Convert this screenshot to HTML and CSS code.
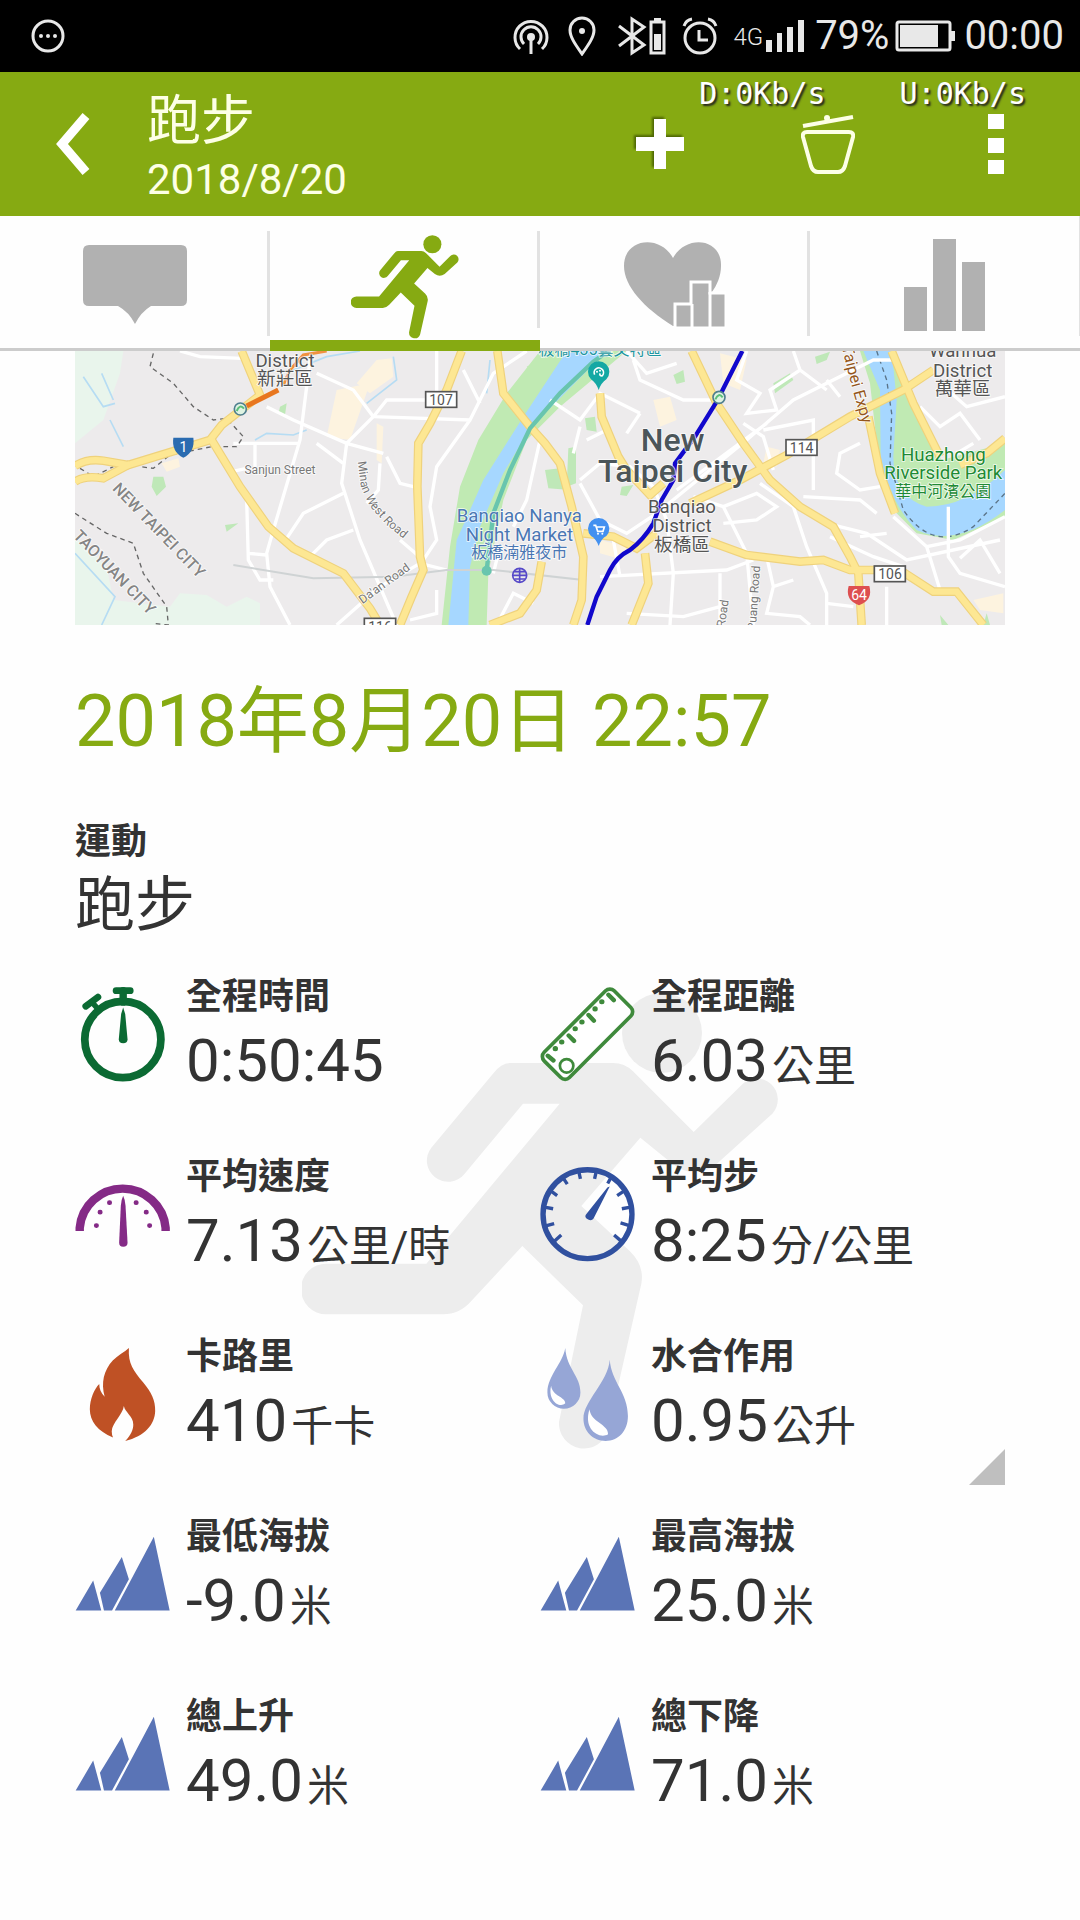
FILE: index.html
```html
<!DOCTYPE html>
<html lang="zh-Hant">
<head>
    <meta charset="UTF-8">
    <meta name="viewport" content="width=device-width, initial-scale=1.0">
    <title>跑步 2018/8/20</title>
    <link rel="stylesheet" href="styles.css">
</head>
<body>
    <!-- Shared icons -->
    <svg class="defs" width="0" height="0" aria-hidden="true">
        <symbol id="runner" viewBox="68 98 1432 1374">
            <circle cx="1147" cy="218" r="120"/>
            <path d="M690 308H1000Q1035 308 1060 333L1242 515L1385 375A62 62 0 0 1 1478 460L1310 612Q1245 660 1180 612L1082 532L905 737L1050 872Q1095 915 1085 970L985 1410A75 75 0 0 1 838 1385L910 1035L728 857L575 1022Q540 1062 490 1062H140A76 76 0 0 1 140 910H440L840 430H730L555 640A62 62 0 0 1 455 562L640 340Q665 308 690 308Z"/>
        </symbol>
        <symbol id="mountain" viewBox="48 85 282 282">
            <path d="M50 333L102 244L126 333ZM122 280L187 174L208 240L158 333H134ZM166 333L282 114L329 333Z"/>
        </symbol>
    </svg>

    <div class="status-bar">
        <svg class="status-icon" width="34" height="34" viewBox="0 0 34 34">
            <circle cx="17" cy="17" r="15" fill="none" stroke="#e8e8e8" stroke-width="3"/>
            <circle cx="10" cy="17" r="2"/><circle cx="17" cy="17" r="2"/><circle cx="24" cy="17" r="2"/>
        </svg>
        <div class="status-right">
            <svg class="status-icon" width="36" height="36" viewBox="0 0 36 36">
                <g fill="none" stroke="#e8e8e8" stroke-width="3">
                    <path d="M7 31A16 16 0 1 1 29 31"/>
                    <path d="M11 26A10 10 0 1 1 25 26"/>
                    <path d="M18 18V36"/>
                </g>
                <circle cx="18" cy="19" r="4"/>
            </svg>
            <svg class="status-icon pin" width="28" height="40" viewBox="0 0 28 40">
                <path d="M14 38C7 28 2 21 2 14A12 12 0 0 1 26 14C26 21 21 28 14 38Z" fill="none" stroke="#e8e8e8" stroke-width="3"/>
                <circle cx="14" cy="15" r="3"/>
            </svg>
            <svg class="status-icon" width="48" height="40" viewBox="0 0 48 40">
                <path d="M1 10L26 29L14 37V3L26 11L1 30" fill="none" stroke="#e8e8e8" stroke-width="3"/>
                <rect x="33" y="6" width="13" height="31" fill="none" stroke="#e8e8e8" stroke-width="3"/>
                <path d="M36 2h7v4h-7zM36 18h7v16h-7z"/>
            </svg>
            <svg class="status-icon alarm" width="36" height="40" viewBox="0 0 36 40">
                <circle cx="18" cy="22" r="15" fill="none" stroke="#e8e8e8" stroke-width="3"/>
                <path d="M17 14V24H26M2 10Q4 4 10 3M34 10Q32 4 26 3" fill="none" stroke="#e8e8e8" stroke-width="3"/>
            </svg>
            <span class="network">4G</span>
            <svg class="status-icon" width="38" height="32" viewBox="0 0 38 32">
                <path d="M0 20h6v12H0zM11 13h5v19h-5zM21 7h6v25h-6zM32 0h6v32h-6z"/>
            </svg>
            <span class="percent">79%</span>
            <svg class="status-icon battery" width="60" height="32" viewBox="0 0 60 32">
                <rect x="2" y="2" width="53" height="28" rx="2" fill="none" stroke="#e8e8e8" stroke-width="3"/>
                <path d="M5 5h38v22H5zM56 11h4v10h-4z"/>
            </svg>
            <span class="clock">00:00</span>
        </div>
    </div>

    <header class="app-bar">
        <button class="back" aria-label="返回">
            <svg width="34" height="62" viewBox="0 0 34 62"><path d="M30 3L6 31L30 59" fill="none" stroke="#fff" stroke-width="9"/></svg>
        </button>
        <div class="app-title">
            <h1>跑步</h1>
            <p>2018/8/20</p>
        </div>
        <div class="actions">
            <button aria-label="新增">
                <svg class="plus" width="48" height="50" viewBox="0 0 48 50"><path d="M18 0h12v18h18v14H30v18H18V32H0V18h18z" fill="#fff"/></svg>
            </button>
            <button aria-label="刪除">
                <svg width="54" height="60" viewBox="0 0 54 60" fill="none" stroke="#fdffe6" stroke-width="4">
                    <path d="M2 12L52 3"/>
                    <path d="M6 18H48Q53 18 52 23L44 52Q42 58 37 58H17Q12 58 10 52L2 23Q1 18 6 18Z"/>
                    <circle cx="26" cy="4" r="3" fill="#fdffe6" stroke="none"/>
                </svg>
            </button>
            <button aria-label="更多">
                <svg width="16" height="60" viewBox="0 0 16 60"><path d="M0 0h16v15H0zM0 24h16v15H0zM0 46h16v14H0z" fill="#fff"/></svg>
            </button>
        </div>
        <div class="net-speed">
            <span>D:0Kb/s</span>
            <span>U:0Kb/s</span>
        </div>
    </header>

    <nav class="tabs">
        <button class="tab" aria-label="備註">
            <svg width="104" height="80" viewBox="0 0 104 80"><path d="M6 0H98Q104 0 104 6V55Q104 61 98 61H68Q58 67 52 79Q46 67 35 61H6Q0 61 0 55V6Q0 0 6 0Z"/></svg>
        </button>
        <button class="tab active" aria-label="運動">
            <svg width="108" height="104"><use href="#runner"/></svg>
        </button>
        <button class="tab" aria-label="心率">
            <svg width="102" height="86" viewBox="0 0 102 86">
                <path d="M49 84C20 66 0 44 0 24C0 -4 36 -8 49 16C62 -8 98 -4 97 24C97 34 93 43 88 50L50 84Z"/>
                <path d="M51 86V62H67V40H86V51H102V86Z" stroke="#fff" stroke-width="3"/>
                <path d="M68 62V86M86 50V86" stroke="#fff" stroke-width="3"/>
            </svg>
        </button>
        <button class="tab" aria-label="圖表">
            <svg width="82" height="92" viewBox="0 0 82 92"><path d="M0 48h23v44H0zM29 0h23v92H29zM58 23h23v69H58z"/></svg>
        </button>
    </nav>

    <main>
        <svg class="map" viewBox="45 33 2790 822" role="img" aria-label="路線地圖">
            <defs>
                <path id="minan" d="M893 365L903 440L930 500L980 555L1060 620"/>
                <path id="expy" d="M2345 20L2370 120L2412 270"/>
                <g id="highways">
                    <path d="M45 378Q80 355 130 362L205 375L450 300L485 255L600 165L545 33"/>
                    <path d="M45 425Q75 405 130 415L210 372"/>
                    <path d="M455 300L540 440L625 560L700 625L850 700L930 805L960 855"/>
                    <path d="M1205 33L1160 150L1110 250L1075 310L1072 440L1080 650L1090 690L1055 770L1020 855"/>
                    <path d="M1312 33L1330 160L1410 260L1455 310L1500 370L1535 500L1570 650L1565 780L1540 855"/>
                    <path d="M1445 665L1430 750L1380 820L1290 855"/>
                    <path d="M1895 33L1970 190L2050 310L2130 420L2220 500L2320 560L2370 650L2395 700L2405 855"/>
                    <path d="M1620 160L1625 230L1675 350L1700 390L1770 465L1810 430"/>
                    <path d="M1890 490L2040 420L2180 345L2370 230L2530 150L2620 90"/>
                    <path d="M2495 33L2560 190L2640 350"/>
                    <path d="M2425 230L2460 400L2505 520"/>
                    <path d="M1570 580L1660 590L1730 625L1790 580"/>
                    <path d="M1950 605L2060 645L2220 665L2290 660L2370 690L2520 690L2620 755L2690 755L2770 855"/>
                    <path d="M1755 640L1765 730L1715 855"/>
                    <path d="M2835 295L2780 340L2700 375"/>
                </g>
            </defs>
            <rect x="45" y="33" width="2790" height="822" fill="#edebec"/>
            <!-- Hills and parks -->
            <path d="M45 33H190L180 100L130 240L45 310ZM45 590L140 680L160 780L330 800L360 760L440 765L500 800L560 770L600 790V855H45Z" fill="#e9f5ec"/>
            <path d="M280 410L310 410L318 440L290 468L275 440ZM660 200L680 190L675 225L655 222ZM495 555L535 550L500 575ZM1455 390L1500 385L1530 450L1465 445ZM1400 80L1440 60L1430 110Z" fill="#bfe8b8"/>
            <path d="M2265 50L2310 35L2300 60L2270 72ZM1840 105L1870 90L1875 125L1850 132ZM2140 130L2190 100L2200 120L2145 160ZM1575 235L1605 230L1610 275L1580 270ZM1525 325L1548 320V430L1520 440ZM1685 440L1720 435L1700 468L1680 465ZM2640 825L2665 855H2645ZM2780 820L2790 855H2770Z" fill="#bfe8b8"/>
            <!-- Built-up blocks -->
            <path d="M830 150L930 130L870 300L800 290ZM950 60L995 55L1000 110L930 160L890 130ZM950 250L970 260L965 370L950 360ZM305 370L355 355L360 380L320 395Z" fill="#fdf3df"/>
            <path d="M1980 40L2060 60L2040 150L1990 130ZM1780 180L1830 170L1850 240L1800 260ZM2120 320L2160 330L2150 380L2110 370ZM1620 600L1700 620L1690 660L1620 640ZM2740 780L2830 760V820L2760 810Z" fill="#fdf3df"/>
            <!-- Rivers -->
            <path d="M1440 33L1340 160L1255 300L1200 440L1170 620L1145 855H1280L1285 700L1330 480L1400 300L1500 200L1700 33Z" fill="#c0eab3"/>
            <path d="M1520 33L1390 230L1270 420L1190 600L1165 855H1225L1230 680L1260 560L1330 400L1410 265L1640 33Z" fill="#a6d7ff"/>
            <path d="M2400 33H2495L2645 360L2835 310V530L2680 600L2570 580L2500 510L2455 350L2430 130Z" fill="#c0eab3"/>
            <path d="M2410 33H2495L2510 180L2500 350Q2500 470 2600 500Q2720 500 2835 390V510Q2690 625 2570 570Q2490 490 2462 350L2460 150Z" fill="#a6d7ff"/>
            <path d="M2450 33L2480 120L2495 220L2490 370L2530 510Q2620 640 2740 560L2835 460" fill="none" stroke="#5b7488" stroke-width="4" stroke-dasharray="14 12"/>
            <path d="M70 110L130 200L165 190M125 100L160 180M150 240L190 320M585 300L620 280L700 285L740 270M920 190L1010 120L1000 50M700 90L800 50L900 33M45 640L165 770L125 855M1290 60L1280 160" fill="none" stroke="#b6dcf3" stroke-width="5"/>
            <!-- Streets -->
            <g fill="none" stroke="#fff" stroke-width="10">
                <path d="M360 33L420 50L545 55M620 200L700 240L860 310L970 340M750 60L720 300L640 570L620 640L630 740L690 855M770 100L880 150L940 230L860 310L845 430L900 600L990 810L1010 855"/>
                <path d="M515 395L560 385M520 310H720M585 310V400M770 310L850 370M850 460L730 520L670 610M880 570L800 600L750 650M560 480L565 660L600 720H640M565 640L620 645"/>
                <path d="M940 230L1230 240L1300 100L1400 33M940 230L980 180L1130 180V33M1210 90L1260 190M1230 240L1130 380L1110 500L1130 600L1090 660L1020 600M1060 440L1020 430L980 350M960 370L955 450L920 490"/>
                <path d="M1080 670L1160 690M830 855L960 740L1080 670M1050 840L1130 820V750M1310 855L1360 760L1420 790M1440 300L1400 480L1360 560M1320 620L1300 700"/>
                <path d="M1470 180L1560 240L1620 160L1740 220M1560 260L1540 340M1580 300L1640 270M1700 33L1760 100L1850 70M1720 60L1740 120L1870 180L1990 180M1740 220L1700 280"/>
                <path d="M1560 420L1620 370L1710 380L1780 440L1820 540L1840 700L1830 855M1560 430L1620 540L1700 580L1790 520L2060 300L2200 180L2440 60H2500M1850 450L2120 250"/>
                <path d="M2060 33L2030 120L2100 160L2060 220L2150 210L2130 150L2220 90L2300 150M2220 90L2200 33M2050 250L2110 290L2140 390M2110 270L2260 240V450M2340 170L2300 120"/>
                <path d="M1900 470L1990 500L2060 640L2080 855M1990 500L2090 460L2150 500L2090 540L1990 550M2100 430L2200 500L2240 620L2300 760V855M2230 470L2400 480L2450 520M2400 310L2340 340L2330 400L2400 450L2460 440"/>
                <path d="M2300 550L2420 580L2540 660L2820 600M2310 590L2440 650L2530 680M2500 530L2600 620L2700 600L2835 530M2665 500V650L2700 700L2835 740M2600 620L2640 750M2700 655L2760 600L2820 700"/>
                <path d="M1620 710L2000 690L2080 660M1660 600L1680 710M1700 820L1870 830L1980 800M1980 700V855M2120 650L2140 740L2200 720M2140 740L2120 820L2220 830L2250 855M2300 790L2380 800M2480 740V855M2400 590L2480 580"/>
                <path d="M2580 200L2640 260L2700 220L2760 300M2640 130L2720 200L2835 170M2740 310L2690 340"/>
            </g>
            <path d="M520 675L760 715L1000 710L1160 690H1300L1570 720" fill="none" stroke="#cfd3d4" stroke-width="6"/>
            <g fill="none" stroke="#666" stroke-width="4" stroke-dasharray="14 12">
                <path d="M280 40L270 80L340 130L400 200L460 240L500 235L550 290L530 320L455 320L330 345L280 385L240 380"/>
                <path d="M60 385L100 410L160 380M45 520L140 580L220 610L250 700L320 800L325 855L280 850"/>
            </g>
            <use href="#highways" class="road-edge"/>
            <use href="#highways" class="road-fill"/>
            <!-- Transit and route -->
            <path d="M1645 33L1600 65L1500 160L1410 265L1350 390L1300 520L1280 690" fill="none" stroke="#68c5ae" stroke-width="13"/>
            <circle cx="1280" cy="692" r="15" fill="#68c5ae"/>
            <path d="M800 33L730 45L690 90L670 135" fill="none" stroke="#f0913f" stroke-width="9"/>
            <path d="M655 150L560 198" fill="none" stroke="#e8761f" stroke-width="15"/>
            <path d="M2047 33L1970 185L1905 290L1845 370L1840 420L1805 480L1780 550Q1750 600 1710 630Q1670 650 1650 690L1610 770L1582 855" fill="none" stroke="#1208cc" stroke-width="13" stroke-linejoin="round"/>
            <g fill="#dff3e2" stroke="#4f7f8f" stroke-width="5">
                <circle cx="541" cy="207" r="18"/>
                <circle cx="1977" cy="172" r="18"/>
            </g>
            <path d="M530 213Q540 190 552 206M1966 178Q1976 156 1988 172" fill="none" stroke="#5bbf7a" stroke-width="6"/>
            <!-- Road shields -->
            <path d="M340 293H400Q406 335 370 353Q334 335 340 293Z" fill="#2a6bb0"/>
            <path d="M2366 738H2428Q2440 780 2397 796Q2354 780 2366 738Z" fill="#dd4f50"/>
            <g fill="#fff" stroke="#555" stroke-width="5">
                <rect x="1097" y="155" width="93" height="47"/>
                <rect x="913" y="835" width="94" height="47"/>
                <rect x="2178" y="299" width="93" height="47"/>
                <rect x="2443" y="678" width="93" height="47"/>
            </g>
            <!-- Place pins -->
            <path d="M1616 150Q1608 128 1593 118A32 32 0 1 1 1639 118Q1624 128 1616 150Z" fill="#14a8a4"/>
            <path d="M1604 104A14 14 0 1 1 1626 108Q1618 108 1620 100" fill="none" stroke="#fff" stroke-width="5"/>
            <circle cx="1611" cy="95" r="3" fill="#fff"/><circle cx="1620" cy="92" r="3" fill="#fff"/>
            <path d="M1616 618Q1608 596 1593 588A32 32 0 1 1 1639 588Q1624 596 1616 618Z" fill="#4390f0"/>
            <path d="M1600 556H1607L1613 574H1629L1633 561H1611" fill="none" stroke="#fff" stroke-width="5"/>
            <circle cx="1614" cy="581" r="3" fill="#fff"/><circle cx="1627" cy="581" r="3" fill="#fff"/>
            <g fill="none" stroke="#5648c8" stroke-width="5">
                <circle cx="1379" cy="706" r="21"/>
                <path d="M1358 706H1400M1379 685V727M1363 695H1395M1363 717H1395"/>
            </g>
            <!-- Labels -->
            <g class="map-text">
                <text x="675" y="82" class="place">District</text>
                <text x="675" y="136" class="place">新莊區</text>
                <text x="660" y="403" class="street">Sanjun Street</text>
                <text class="street start"><textPath href="#minan">Minan West Road</textPath></text>
                <text class="street" transform="translate(980 740) rotate(-36)">Da'an Road</text>
                <text class="border" transform="translate(285 582) rotate(46)">NEW TAIPEI CITY</text>
                <text class="border" transform="translate(152 708) rotate(46)">TAOYUAN CITY</text>
                <text x="1378" y="546" class="place market">Banqiao Nanya</text>
                <text x="1378" y="603" class="place market">Night Market</text>
                <text x="1378" y="654" class="local market">板橋湳雅夜市</text>
                <text x="1620" y="45" class="local arts">板橋435藝文特區</text>
                <text x="1838" y="333" class="city">New</text>
                <text x="1838" y="426" class="city">Taipei City</text>
                <text x="1866" y="520" class="place">Banqiao</text>
                <text x="1866" y="577" class="place">District</text>
                <text x="1866" y="634" class="place">板橋區</text>
                <text class="road-name start"><textPath href="#expy">Taipei Expy</textPath></text>
                <text class="street" transform="translate(2000 822) rotate(-82)">Road</text>
                <text class="street" transform="translate(2094 775) rotate(-86)">Puang Road</text>
                <text x="2708" y="52" class="place">Wanhua</text>
                <text x="2708" y="110" class="place">District</text>
                <text x="2708" y="166" class="place">萬華區</text>
                <text x="2650" y="362" class="place park">Huazhong</text>
                <text x="2650" y="418" class="place park">Riverside Park</text>
                <text x="2650" y="470" class="local park">華中河濱公園</text>
                <text x="1143" y="194" class="shield">107</text>
                <text x="960" y="876" class="shield">116</text>
                <text x="2225" y="338" class="shield">114</text>
                <text x="2490" y="717" class="shield">106</text>
                <text x="370" y="336" class="shield light">1</text>
                <text x="2397" y="780" class="shield light">64</text>
            </g>
        </svg>

        <h2 class="date">2018年8月20日 22:57</h2>

        <div class="activity">
            <div class="label">運動</div>
            <div class="value">跑步</div>
        </div>

        <section class="stats">
            <svg class="watermark" viewBox="0 0 478 458" aria-hidden="true"><use href="#runner"/></svg>
            <span class="corner"></span>

            <div class="stat">
                <svg class="icon" viewBox="48 85 282 282" fill="none" stroke="#0b6a33" stroke-linecap="round">
                    <circle cx="190" cy="241" r="113" stroke-width="23"/>
                    <path d="M170 96H212" stroke-width="20"/>
                    <path d="M191 96V130" stroke-width="22"/>
                    <path d="M80 142L116 115" stroke-width="20"/>
                    <path d="M98 130L116 150" stroke-width="16"/>
                    <path d="M191 146L197 165L204 240Q204 252 191 252Q178 252 178 240L185 165Z" fill="#0b6a33" stroke="none"/>
                </svg>
                <div>
                    <div class="label">全程時間</div>
                    <div class="value">0:50:45</div>
                </div>
            </div>
            <div class="stat">
                <svg class="icon" viewBox="783 85 282 282" fill="none" stroke="#3f8a3c" stroke-linecap="round">
                    <rect x="-147" y="-53" width="294" height="106" rx="18" stroke-width="11" fill="#fff" transform="translate(924 225) rotate(-45)"/>
                    <path d="M806 289L823 303M868 229L884 245M927 168L943 185M986 108L1002 124" stroke-width="13"/>
                    <path d="M828 268h1M847 248h1M887 209h1M907 189h1M946 150h1M966 129h1" stroke-width="15"/>
                    <circle cx="862" cy="319" r="20" stroke-width="8"/>
                </svg>
                <div>
                    <div class="label">全程距離</div>
                    <div class="value">6.03<span class="unit">公里</span></div>
                </div>
            </div>

            <div class="stat">
                <svg class="icon" viewBox="48 625 282 282" fill="none" stroke="#842a86">
                    <path d="M62 815V806A128 128 0 0 1 317 806V815" stroke-width="25"/>
                    <path d="M111 799h1M122 759h1M150 731h1M229 731h1M259 759h1M269 799h1" stroke-width="14" stroke-linecap="round"/>
                    <path d="M191 710Q197 722 198 740L204 850Q204 862 191 862Q179 862 179 850L184 740Q185 722 191 710Z" fill="#842a86" stroke="none"/>
                </svg>
                <div>
                    <div class="label">平均速度</div>
                    <div class="value">7.13<span class="unit">公里/時</span></div>
                </div>
            </div>
            <div class="stat">
                <svg class="icon" viewBox="783 625 282 282" fill="none" stroke="#30509f">
                    <circle cx="924" cy="765" r="132" stroke-width="16"/>
                    <path d="M903 660L898 638M945 660L950 638M984 674L996 652M1012 710L1033 696M1026 749L1052 744M1022 791L1046 798M1003 827L1024 845M864 676L852 658M834 710L815 696M822 749L796 744M825 793L800 800M846 827L824 847" stroke-width="10"/>
                    <path d="M990 683L942 778Q936 787 926 781Q914 775 919 767L983 686Z" fill="#30509f" stroke="none"/>
                </svg>
                <div>
                    <div class="label">平均步</div>
                    <div class="value">8:25<span class="unit">分/公里</span></div>
                </div>
            </div>

            <div class="stat">
                <svg class="icon" viewBox="48 1165 282 282" fill="#bf5125">
                    <path d="M208 1168C205 1215 222 1235 250 1270C275 1300 287 1325 286 1355C285 1395 255 1430 197 1444C215 1425 221 1410 221 1395C221 1370 197 1360 193 1340C190 1365 158 1390 157 1415Q157 1425 161 1434C115 1415 92 1385 92 1350C92 1320 105 1290 120 1275C120 1290 125 1300 136 1313C125 1270 133 1235 160 1205C175 1190 195 1180 208 1168Z"/>
                </svg>
                <div>
                    <div class="label">卡路里</div>
                    <div class="value">410<span class="unit">千卡</span></div>
                </div>
            </div>
            <div class="stat">
                <svg class="icon" viewBox="783 1165 282 282" fill="#96a6d6">
                    <path d="M858 1168C862 1230 903 1250 903 1300A49 48 0 0 1 805 1300C805 1250 850 1215 858 1168Z"/>
                    <path d="M990 1203C995 1270 1044 1300 1044 1370C1044 1415 1015 1444 978 1444C940 1444 912 1415 912 1378C912 1325 985 1270 990 1203Z"/>
                    <path d="M816 1280C820 1312 858 1312 858 1332C842 1348 805 1325 816 1280ZM930 1350C933 1388 987 1395 985 1424C960 1440 910 1410 930 1350Z" fill="#fff"/>
                </svg>
                <div>
                    <div class="label">水合作用</div>
                    <div class="value">0.95<span class="unit">公升</span></div>
                </div>
            </div>

            <div class="stat">
                <svg class="icon mountain"><use href="#mountain"/></svg>
                <div>
                    <div class="label">最低海拔</div>
                    <div class="value">-9.0<span class="unit">米</span></div>
                </div>
            </div>
            <div class="stat">
                <svg class="icon mountain"><use href="#mountain"/></svg>
                <div>
                    <div class="label">最高海拔</div>
                    <div class="value">25.0<span class="unit">米</span></div>
                </div>
            </div>

            <div class="stat">
                <svg class="icon mountain"><use href="#mountain"/></svg>
                <div>
                    <div class="label">總上升</div>
                    <div class="value">49.0<span class="unit">米</span></div>
                </div>
            </div>
            <div class="stat">
                <svg class="icon mountain"><use href="#mountain"/></svg>
                <div>
                    <div class="label">總下降</div>
                    <div class="value">71.0<span class="unit">米</span></div>
                </div>
            </div>
        </section>
    </main>
</body>
</html>
```
FILE: styles.css
```css
body {
    font-family: Roboto, "Noto Sans CJK TC", sans-serif;
    background-color: #fefefe;
    color: #333;
    margin: 0;
}

h1, h2, p {
    margin: 0;
    font-weight: 400;
}

button {
    background: none;
    border: none;
    padding: 0;
    cursor: pointer;
}

svg {
    display: block;
}

.defs {
    position: absolute;
}

/* Status bar */
.status-bar {
    display: flex;
    justify-content: space-between;
    align-items: center;
    height: 72px;
    padding: 0 16px 0 31px;
    background-color: #000;
    color: #e8e8e8;
    font-size: 40px;
    line-height: 72px;
}

.status-right {
    display: flex;
    align-items: center;
}

.status-icon {
    fill: #e8e8e8;
}

.pin {
    margin: 0 22px 0 19px;
}

.alarm {
    margin: 0 15px 0 16px;
}

.network {
    font-size: 24px;
    font-weight: 300;
    margin-right: 3px;
    padding-top: 2px;
}

.percent {
    margin: 0 6px 0 11px;
}

.battery {
    margin-right: 9px;
}

/* App bar */
.app-bar {
    position: relative;
    display: flex;
    align-items: center;
    height: 144px;
    background-color: #86aa12;
    color: #fdffe6;
}

.back {
    width: 147px;
    height: 144px;
    padding-left: 56px;
}

.app-title {
    flex: 1;
    padding-top: 8px;
}

.app-title h1 {
    font-size: 54px;
    line-height: 64px;
}

.app-title p {
    font-size: 42px;
    line-height: 52px;
}

.actions {
    display: flex;
}

.actions button {
    display: flex;
    justify-content: center;
    align-items: center;
    width: 168px;
    height: 144px;
}

.plus {
    filter: drop-shadow(-2px -2px 1px #4d6603);
}

.net-speed {
    position: absolute;
    top: 4px;
    right: 54px;
    display: flex;
    gap: 74px;
    font-family: "DejaVu Sans Mono", monospace;
    font-size: 30px;
    line-height: 36px;
    color: #fff;
    text-shadow: 2px 2px 2px #222;
}

/* Tabs */
.tabs {
    display: grid;
    grid-template-columns: repeat(4, 1fr);
    background-color: #fefefe;
}

.tab {
    position: relative;
    display: flex;
    justify-content: center;
    align-items: center;
    height: 135px;
    box-sizing: border-box;
    border-bottom: 3px solid #ccc;
    padding-top: 5px;
    fill: #b1b1b1;
}

.tab::after {
    content: "";
    position: absolute;
    top: 15px;
    bottom: 12px;
    right: 0;
    width: 3px;
    background-color: #e2e2e2;
}

.tab:last-child::after {
    top: 0;
    width: 1px;
}

.tab.active {
    border-bottom: 11px solid #86aa12;
    padding-top: 18px;
    fill: #86aa12;
}

/* Content */
main {
    padding: 0 75px 96px;
}

.map {
    width: 100%;
    height: auto;
}

.road-edge {
    fill: none;
    stroke: #efd27c;
    stroke-width: 26px;
}

.road-fill {
    fill: none;
    stroke: #fde793;
    stroke-width: 19px;
}

.map-text text {
    text-anchor: middle;
    fill: #555;
    stroke: #fff;
    stroke-width: 5px;
    stroke-opacity: 0.8;
    paint-order: stroke;
}

.map-text .start {
    text-anchor: start;
}

.map-text .place {
    font-size: 56px;
}

.map-text .local {
    font-size: 48px;
}

.map-text .street {
    font-size: 36px;
    fill: #777;
}

.map-text .road-name {
    font-size: 48px;
    fill: #94561b;
}

.map-text .border {
    font-size: 48px;
    font-weight: 500;
    fill: #858585;
}

.map-text .city {
    font-size: 96px;
    font-weight: 500;
    fill: #4b5559;
}

.map-text .market {
    fill: #4a77b4;
}

.map-text .arts {
    fill: #1e96a0;
}

.map-text .park {
    fill: #1f8a35;
}

.map-text .shield {
    font-size: 42px;
    stroke: none;
}

.map-text .light {
    fill: #fff;
}

.date {
    margin-top: 55px;
    font-size: 72px;
    line-height: 84px;
    color: #86aa12;
}

.activity {
    margin: 56px 0 27px;
}

.label {
    font-size: 36px;
    font-weight: 700;
    line-height: 44px;
}

.value {
    font-size: 60px;
    line-height: 84px;
}

.unit {
    font-size: 42px;
    line-height: 42px;
    margin-left: 4px;
}

.stats {
    position: relative;
    display: grid;
    grid-template-columns: 1fr 1fr;
    row-gap: 52px;
}

.stat {
    position: relative;
    display: flex;
    gap: 16px;
}

.icon {
    flex: none;
    width: 95px;
    height: 95px;
    margin-top: 12px;
}

.mountain {
    fill: #5a74b6;
}

.watermark {
    position: absolute;
    top: 18px;
    left: 50%;
    width: 478px;
    margin-left: -238px;
    fill: #ededed;
}

.corner {
    position: absolute;
    top: 474px;
    right: 0;
    width: 36px;
    height: 36px;
    background-color: #bfbfbf;
    clip-path: polygon(100% 0, 100% 100%, 0 100%);
}
```
